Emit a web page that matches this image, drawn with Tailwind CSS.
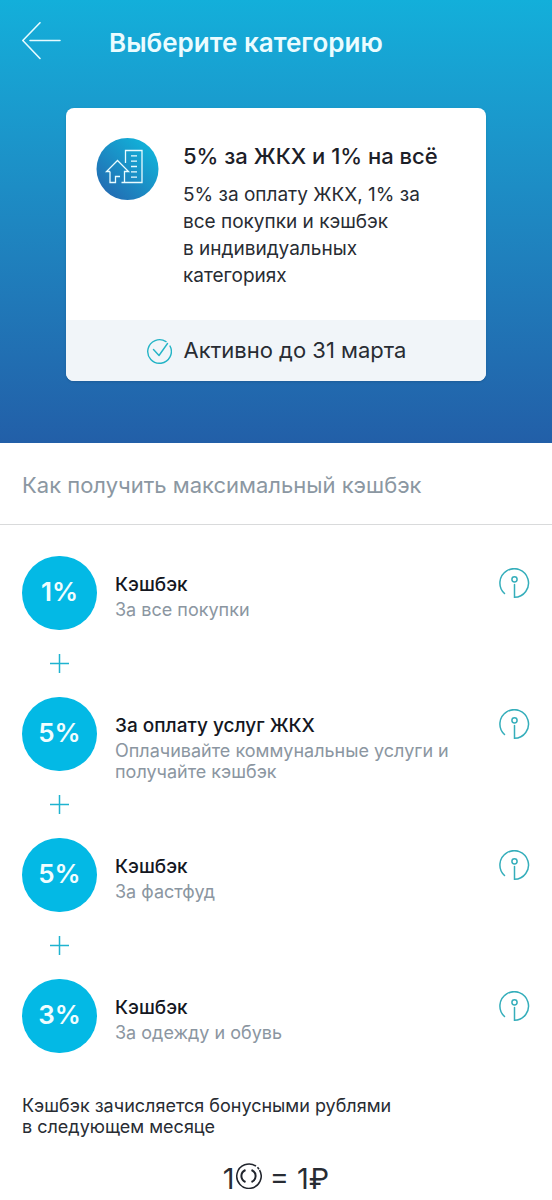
<!DOCTYPE html>
<html lang="ru">
<head>
<meta charset="utf-8">
<meta name="viewport" content="width=device-width, initial-scale=1">
<title>Выберите категорию</title>
<script src="https://cdn.jsdelivr.net/npm/@tailwindcss/browser@4"></script>
</head>
<body class="bg-white font-['Inter','Liberation_Sans',sans-serif] text-[#282c33]">
<svg class="hidden" aria-hidden="true">
  <symbol id="info" viewBox="0 0 32 32">
    <g fill="none" stroke="#35aebb" stroke-width="1.5" stroke-linecap="round">
      <path d="M6.500 25.500A14.300 14.300 0 1 1 16.500 29.300V16.500"/>
      <circle cx="16.500" cy="11.300" r="2.600"/>
    </g>
  </symbol>
  <symbol id="plus" viewBox="0 0 20 20">
    <path d="M9.500 0v19M0 9.500h19" stroke="#1fb3d0" stroke-width="1.5" fill="none"/>
  </symbol>
</svg>

<div class="bg-linear-to-b from-[#13afda] to-[#225fa8] pb-[62px]">
  <header class="flex items-center px-[22px] pt-5">
    <button type="button" aria-label="Назад" class="block h-10 w-10 shrink-0">
      <svg class="h-10 w-10" viewBox="0 0 40 40" fill="none" stroke="#e6fbff" stroke-width="1.6" stroke-linecap="round"><path d="M18 .800L.800 18.500 18 36.500M8 18.500h30"/></svg>
    </button>
    <h1 class="ml-[47px] pt-0.5 text-[26px] leading-[42px] font-semibold text-[#ebfcff]">Выберите категорию</h1>
  </header>

  <section class="mx-[66px] mt-11 overflow-hidden rounded-lg bg-white shadow-sm">
    <div class="flex gap-6 px-[30px] pt-[30px] pb-[31px]">
      <svg class="h-[63px] w-[63px] shrink-0" viewBox="0 0 63 63" fill="none">
        <defs><linearGradient id="disc" x1=".85" y1=".15" x2=".1" y2=".95"><stop stop-color="#12b0d8"/><stop offset="1" stop-color="#2468b0"/></linearGradient></defs>
        <circle cx="31.500" cy="31" r="31" fill="url(#disc)"/>
        <g stroke="#eafcff" stroke-width="1.300">
          <path d="M29.500 25V12.500h16.500v32H25.500"/>
          <path d="M35 17.800h6M35 23.200h6M35 28.500h6M35 33.800h6M35 39.200h6"/>
          <path d="M14 33.500V44.500h5.500v-6h4.500M28.500 44V33.500h4L21.500 22.500 10.500 33.500h3.500"/>
        </g>
      </svg>
      <div>
        <h2 class="pt-0.5 text-[22px] leading-[33px] font-medium text-[#1c2028]">5% за ЖКХ и 1% на всё</h2>
        <p class="mt-2 text-[19px] leading-[27px]">5% за оплату ЖКХ, 1% за<br>все покупки и кэшбэк<br>в индивидуальных<br>категориях</p>
      </div>
    </div>
    <div class="flex h-[61px] items-center justify-center gap-3 bg-[#f1f5f9]">
      <svg class="h-[26px] w-[26px]" viewBox="0 0 26 26" fill="none" stroke="#24b4c6" stroke-width="1.400" stroke-linecap="round" stroke-linejoin="round"><path d="M24 8A11.800 11.800 0 1 1 20 3.600M21.500 5.500L13 17.500 7.500 11.500"/></svg>
      <span class="text-[22px]">Активно до 31 марта</span>
    </div>
  </section>
</div>

<h2 class="flex h-[82px] items-center border-b border-[#d9dadb] px-[22px] pt-1 text-[22px] text-[#8b97a2]">Как получить максимальный кэшбэк</h2>

<main class="px-[22px] pt-[31px]">
  <ul>
    <li class="flex">
      <div class="flex w-[75px] shrink-0 flex-col items-center">
        <span class="flex h-[74px] w-[75px] items-center justify-center rounded-full bg-[#03b9e5] pb-1 text-[26px] font-semibold text-[#f0fdff]">1%</span>
        <span class="flex h-[67px] items-center"><svg class="h-5 w-5"><use href="#plus"/></svg></span>
      </div>
      <div class="ml-[18px] min-w-0 flex-1 pt-[15px]">
        <h3 class="text-[19px] leading-[27px] font-medium text-[#14171f]">Кэшбэк</h3>
        <p class="mt-px text-[18px] leading-[21px] text-[#8b96a1]">За все покупки</p>
      </div>
      <button type="button" aria-label="Подробнее" class="mt-3 h-8 w-8 shrink-0"><svg class="h-8 w-8"><use href="#info"/></svg></button>
    </li>
    <li class="flex">
      <div class="flex w-[75px] shrink-0 flex-col items-center">
        <span class="flex h-[74px] w-[75px] items-center justify-center rounded-full bg-[#03b9e5] pb-1 text-[26px] font-semibold text-[#f0fdff]">5%</span>
        <span class="flex h-[67px] items-center"><svg class="h-5 w-5"><use href="#plus"/></svg></span>
      </div>
      <div class="ml-[18px] min-w-0 flex-1 pt-[15px]">
        <h3 class="text-[19px] leading-[27px] font-medium text-[#14171f]">За оплату услуг ЖКХ</h3>
        <p class="mt-px text-[18px] leading-[21px] text-[#8b96a1]">Оплачивайте коммунальные услуги и<br>получайте кэшбэк</p>
      </div>
      <button type="button" aria-label="Подробнее" class="mt-3 h-8 w-8 shrink-0"><svg class="h-8 w-8"><use href="#info"/></svg></button>
    </li>
    <li class="flex">
      <div class="flex w-[75px] shrink-0 flex-col items-center">
        <span class="flex h-[74px] w-[75px] items-center justify-center rounded-full bg-[#03b9e5] pb-1 text-[26px] font-semibold text-[#f0fdff]">5%</span>
        <span class="flex h-[67px] items-center"><svg class="h-5 w-5"><use href="#plus"/></svg></span>
      </div>
      <div class="ml-[18px] min-w-0 flex-1 pt-[15px]">
        <h3 class="text-[19px] leading-[27px] font-medium text-[#14171f]">Кэшбэк</h3>
        <p class="mt-px text-[18px] leading-[21px] text-[#8b96a1]">За фастфуд</p>
      </div>
      <button type="button" aria-label="Подробнее" class="mt-3 h-8 w-8 shrink-0"><svg class="h-8 w-8"><use href="#info"/></svg></button>
    </li>
    <li class="flex">
      <span class="flex h-[74px] w-[75px] shrink-0 items-center justify-center rounded-full bg-[#03b9e5] pb-1 text-[26px] font-semibold text-[#f0fdff]">3%</span>
      <div class="ml-[18px] min-w-0 flex-1 pt-[15px]">
        <h3 class="text-[19px] leading-[27px] font-medium text-[#14171f]">Кэшбэк</h3>
        <p class="mt-px text-[18px] leading-[21px] text-[#8b96a1]">За одежду и обувь</p>
      </div>
      <button type="button" aria-label="Подробнее" class="mt-3 h-8 w-8 shrink-0"><svg class="h-8 w-8"><use href="#info"/></svg></button>
    </li>
  </ul>

  <p class="mt-[42px] text-[18px] leading-[21px]">Кэшбэк зачисляется бонусными рублями<br>в следующем месяце</p>
  <p class="mt-6 flex items-center justify-center text-[29px] leading-9">
    <span>1</span>
    <svg class="mb-1.5 h-[26px] w-[27px]" role="img" aria-label="бонусный рубль" viewBox="0 0 27 26" fill="none" stroke="#20242c" stroke-width="1.500"><path d="M24.500 7A12.200 12.200 0 1 1 21 3.200M22.500 4.200l1.500 2"/><path d="M10.500 7C5 9.500 5 16.500 10.500 19M16.500 7c5.500 2.500 5.500 9.500 0 12" stroke-width="2"/></svg>
    <span class="ml-2">= 1₽</span>
  </p>
</main>
</body>
</html>
